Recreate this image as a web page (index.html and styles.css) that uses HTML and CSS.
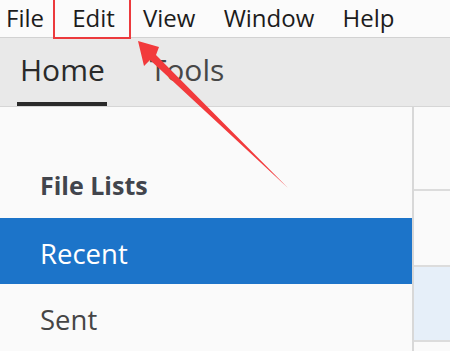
FILE: index.html
```html
<!DOCTYPE html>
<html>
<head>
<meta charset="utf-8">
<link rel="stylesheet" href="styles.css">
</head>
<body>
<div class="app">
  <nav class="menubar">
    <span class="menu-item">File</span>
    <span class="menu-item menu-item--marked">Edit</span>
    <span class="menu-item">View</span>
    <span class="menu-item">Window</span>
    <span class="menu-item">Help</span>
  </nav>
  <div class="tabbar">
    <span class="tab tab--active">Home</span>
    <span class="tab">Tools</span>
  </div>
  <div class="main">
    <aside class="sidebar">
      <h2 class="sidebar-title">File Lists</h2>
      <div class="list-item list-item--selected">Recent</div>
      <div class="list-item">Sent</div>
    </aside>
    <section class="content">
      <div class="row row--head"></div>
      <div class="row row--plain"></div>
      <div class="row row--hl"></div>
      <div class="row row--rest"></div>
    </section>
  </div>
  <svg class="arrow" width="450" height="351" viewBox="0 0 450 351">
    <polygon points="138,41 159,47 156,55 288,188 150,60 144,66" fill="#f23a3c"/>
  </svg>
</div>
</body>
</html>
```
FILE: styles.css
```css
* { box-sizing: border-box; }
html, body { margin: 0; padding: 0; }
body {
  width: 450px;
  height: 351px;
  overflow: hidden;
  font-family: "Open Sans", "Noto Sans", sans-serif;
  background: #fafafa;
}
.app { position: relative; width: 450px; height: 351px; }

.menubar {
  display: flex;
  gap: 28.2px;
  height: 38px;
  padding-left: 6px;
  background: #fbfbfb;
  border-bottom: 1px solid #d2d2d2;
}
.menu-item {
  position: relative;
  padding-top: 2px;
  font-size: 24px;
  line-height: 31px;
  color: #1c1c1c;
}
.menu-item--marked::after {
  content: "";
  position: absolute;
  left: -19px;
  right: -16px;
  top: -6px;
  bottom: -2px;
  border: 2.5px solid #ec3a3d;
}

.tabbar {
  display: flex;
  gap: 40px;
  height: 69px;
  padding-left: 17px;
  background: #e9e9e9;
  border-bottom: 1px solid #d6d6d6;
}
.tab {
  padding: 12px 2px 12px 3px;
  font-size: 30px;
  line-height: 40px;
  color: #474747;
  border-bottom: 4px solid transparent;
}
.tab--active {
  color: #2a2a2a;
  border-bottom-color: #2b2b2b;
}

.main {
  display: flex;
  height: 244px;
}
.sidebar {
  width: 414px;
  flex: none;
  background: #fafafa;
  border-right: 2px solid #d8d8d8;
  padding-top: 62px;
}
.sidebar-title {
  margin: 0 0 17px 0;
  padding-left: 40px;
  font-size: 25px;
  line-height: 32px;
  font-weight: 700;
  color: #42454d;
}
.list-item {
  height: 66px;
  padding: 17px 0 0 40px;
  font-size: 27.5px;
  line-height: 38px;
  color: #454545;
}
.list-item--selected {
  background: #1c74c9;
  color: #ffffff;
}

.content {
  flex: 1;
  display: flex;
  flex-direction: column;
}
.row { border-bottom: 2px solid #dcdcdc; background: #fafafa; }
.row--head { height: 84px; }
.row--plain { height: 76px; }
.row--hl { height: 75px; background: #e6eff9; }
.row--rest { flex: 1; border-bottom: none; }

.arrow {
  position: absolute;
  left: 0;
  top: 0;
  pointer-events: none;
}
```
